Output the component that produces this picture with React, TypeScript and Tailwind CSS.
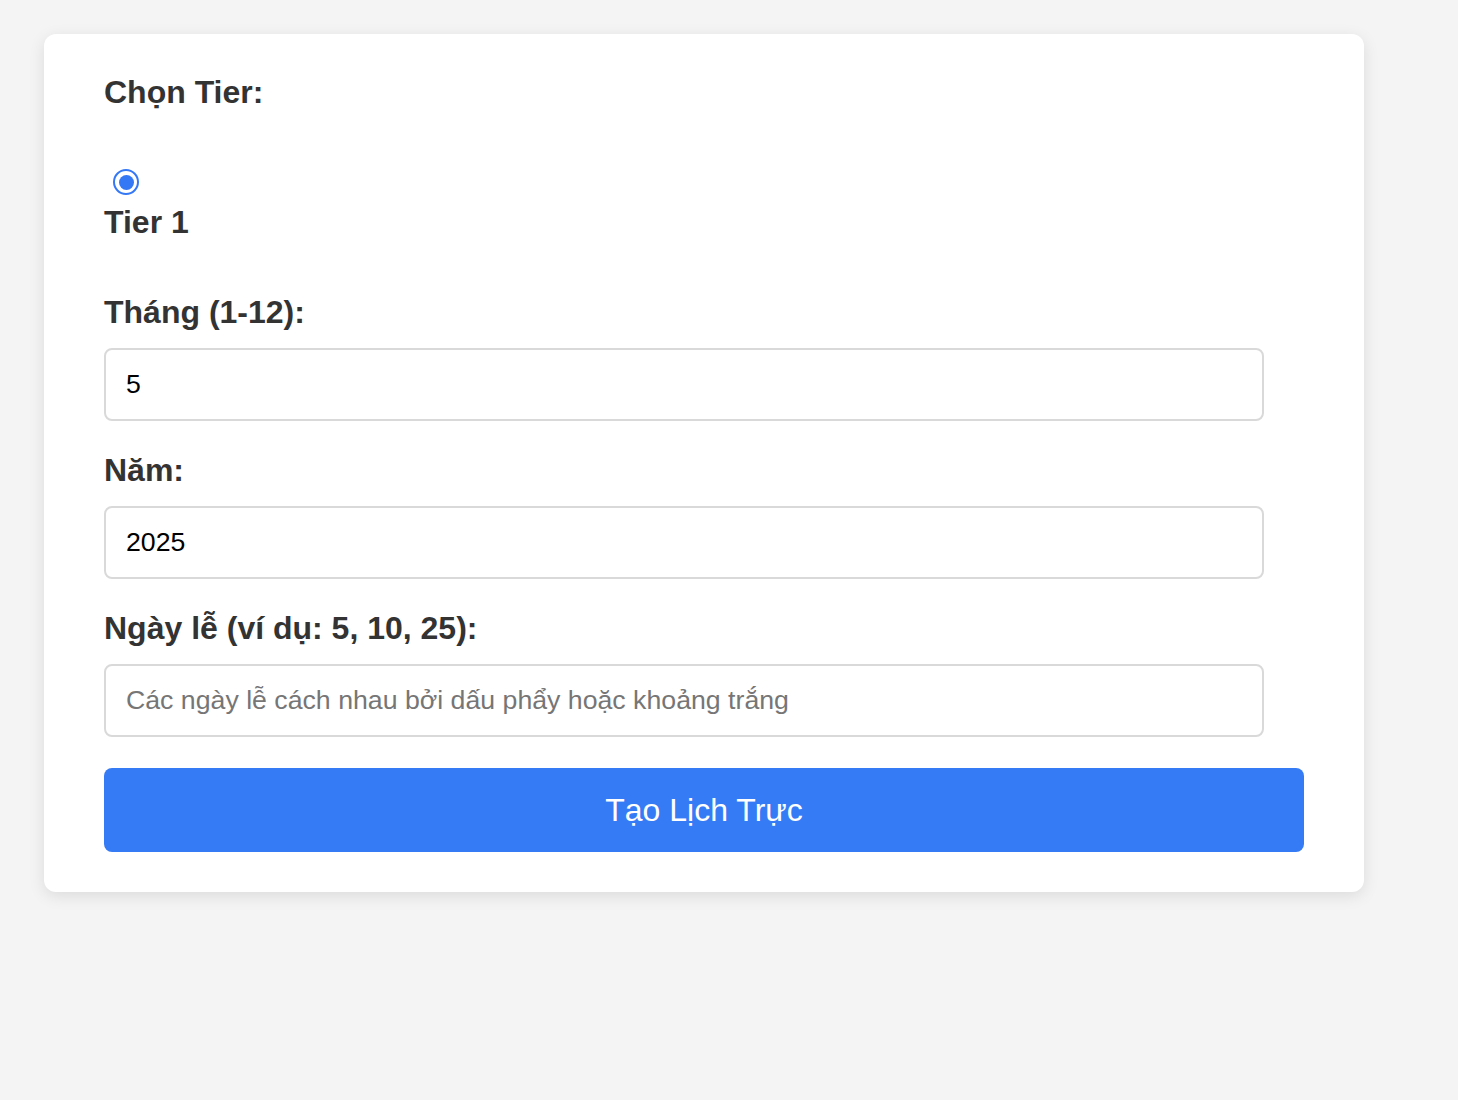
import React from "react";

export default function App() {
  const font = { fontFamily: '"Liberation Sans", Arial, sans-serif' };
  return (
    <div className="min-h-[1100px] w-full bg-[#f4f4f4] pt-[34px] pl-[44px]" style={font}>
      <div className="w-[1320px] rounded-[12px] bg-white px-[60px] pt-[40px] pb-[40px] shadow-[0_4px_16px_rgba(0,0,0,0.1)]">
        <div className="text-[32px] leading-[36px] font-bold text-[#333]">Chọn Tier:</div>
        <div className="mt-[59px] flex flex-col items-start">
          <label className="ml-[9px] flex h-[26px] w-[26px] items-center justify-center rounded-full border-[2.5px] border-[#3478f6] bg-white">
            <input type="radio" defaultChecked name="tier" className="sr-only" />
            <span className="block h-[15px] w-[15px] rounded-full bg-[#3478f6]" />
          </label>
          <div className="mt-[9px] text-[32px] leading-[36px] font-bold text-[#333]">Tier 1</div>
        </div>
        <div className="mt-[54px] text-[32px] leading-[36px] font-bold text-[#333]">Tháng (1-12):</div>
        <input
          type="text"
          defaultValue="5"
          className="mt-[18px] block h-[73px] w-[1160px] rounded-[8px] border-2 border-[#d9d9d9] bg-white pl-[20px] text-[26.7px] text-black outline-none"
        />
        <div className="mt-[31px] text-[32px] leading-[36px] font-bold text-[#333]">Năm:</div>
        <input
          type="text"
          defaultValue="2025"
          className="mt-[18px] block h-[73px] w-[1160px] rounded-[8px] border-2 border-[#d9d9d9] bg-white pl-[20px] text-[26.7px] text-black outline-none"
        />
        <div className="mt-[31px] text-[32px] leading-[36px] font-bold text-[#333]">Ngày lễ (ví dụ: 5, 10, 25):</div>
        <input
          type="text"
          placeholder="Các ngày lễ cách nhau bởi dấu phẩy hoặc khoảng trắng"
          className="mt-[18px] block h-[73px] w-[1160px] rounded-[8px] border-2 border-[#d9d9d9] bg-white pl-[20px] text-[26.7px] text-black outline-none placeholder:text-[#767676]"
        />
        <button className="mt-[31px] block h-[84px] w-[1200px] rounded-[8px] bg-[#367bf6] text-[32px] text-white">
          Tạo Lịch Trực
        </button>
      </div>
    </div>
  );
}
